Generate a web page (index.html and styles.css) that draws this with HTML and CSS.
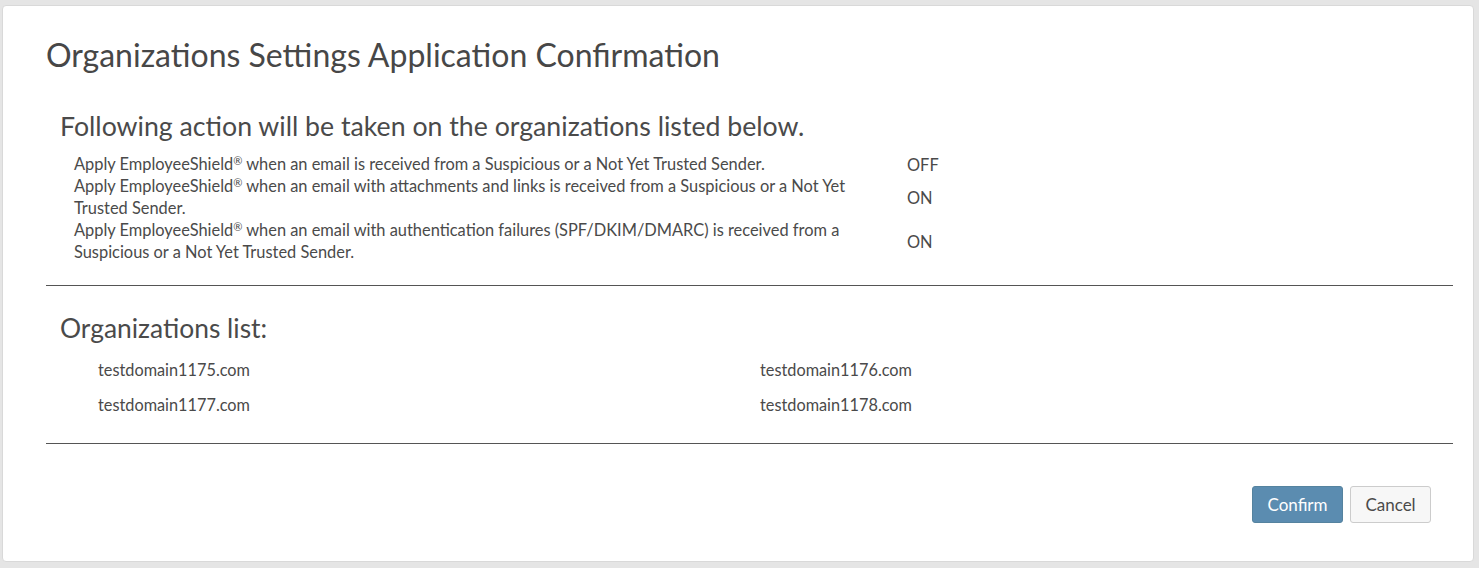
FILE: index.html
```html
<!DOCTYPE html>
<html>
<head>
<meta charset="utf-8">
<link rel="stylesheet" href="styles.css">
</head>
<body>
<div class="card">
  <h1 class="title">Organizations Settings Application Confirmation</h1>
  <section class="actions">
    <h2 class="subhead">Following action will be taken on the organizations listed below.</h2>
    <div class="rule-row">
      <div class="rule-text">Apply EmployeeShield<sup>®</sup> when an email is received from a Suspicious or a Not Yet Trusted Sender.</div>
      <div class="rule-val">OFF</div>
    </div>
    <div class="rule-row">
      <div class="rule-text">Apply EmployeeShield<sup>®</sup> when an email with attachments and links is received from a Suspicious or a Not Yet Trusted Sender.</div>
      <div class="rule-val">ON</div>
    </div>
    <div class="rule-row">
      <div class="rule-text">Apply EmployeeShield<sup>®</sup> when an email with authentication failures (SPF/DKIM/DMARC) is received from a Suspicious or a Not Yet Trusted Sender.</div>
      <div class="rule-val">ON</div>
    </div>
  </section>
  <hr class="sep">
  <section class="orgs">
    <h2 class="subhead small">Organizations list:</h2>
    <div class="org-grid">
      <div class="org">testdomain1175.com</div>
      <div class="org">testdomain1176.com</div>
      <div class="org">testdomain1177.com</div>
      <div class="org">testdomain1178.com</div>
    </div>
  </section>
  <hr class="sep">
  <div class="footer">
    <button class="btn btn-primary">Confirm</button>
    <button class="btn btn-default">Cancel</button>
  </div>
</div>
</body>
</html>
```
FILE: styles.css
```css
html, body {
  margin: 0;
  padding: 0;
  background: #e5e5e5;
}
body {
  font-family: "Lato", "Noto Sans", "Liberation Sans", sans-serif;
  color: #4a4a4a;
  padding: 5px 5px 6px 2px;
}
.card {
  background: #fff;
  border: 1px solid #d9d9d9;
  border-radius: 4px;
  height: 557px;
  box-sizing: border-box;
  padding: 0 20px 0 43px;
}
.title {
  margin: 0;
  padding-top: 29px;
  font-size: 32px;
  font-weight: 400;
  line-height: 40px;
  color: #474747;
}
.actions {
  padding: 34px 0 0 14px;
}
.subhead {
  margin: 0 0 10px;
  font-size: 26.7px;
  font-weight: 400;
  line-height: 34px;
  color: #4a4a4a;
}
.subhead.small {
  font-size: 26.4px;
  margin-bottom: 14px;
}
.rule-row {
  display: flex;
  align-items: center;
  padding-left: 14px;
}
.rule-text {
  width: 780px;
  font-size: 16.4px;
  line-height: 22px;
}
.rule-text sup {
  font-size: 11px;
  line-height: 0;
  vertical-align: 5px;
}
.rule-val {
  margin-left: 53px;
  font-size: 16.4px;
}
.sep {
  margin: 22px 0 0 0;
  border: 0;
  border-top: 1px solid #555;
}
.orgs {
  padding: 25px 0 5px 14px;
}
.org-grid {
  display: grid;
  grid-template-columns: 662px 1fr;
  padding-left: 38px;
  row-gap: 13px;
}
.org {
  font-size: 16.3px;
  line-height: 22px;
}
.footer {
  display: flex;
  justify-content: flex-end;
  gap: 7px;
  padding: 42px 22px 0 0;
}
.btn {
  font-family: inherit;
  font-size: 17px;
  height: 37px;
  border-radius: 3px;
  padding: 0 10px;
  cursor: pointer;
}
.btn-primary {
  background: #5b8cb0;
  color: #fff;
  border: 1px solid #55839f;
  width: 91px;
}
.btn-default {
  background: #f7f7f7;
  color: #4a4a4a;
  border: 1px solid #ccc;
  width: 81px;
}
```
